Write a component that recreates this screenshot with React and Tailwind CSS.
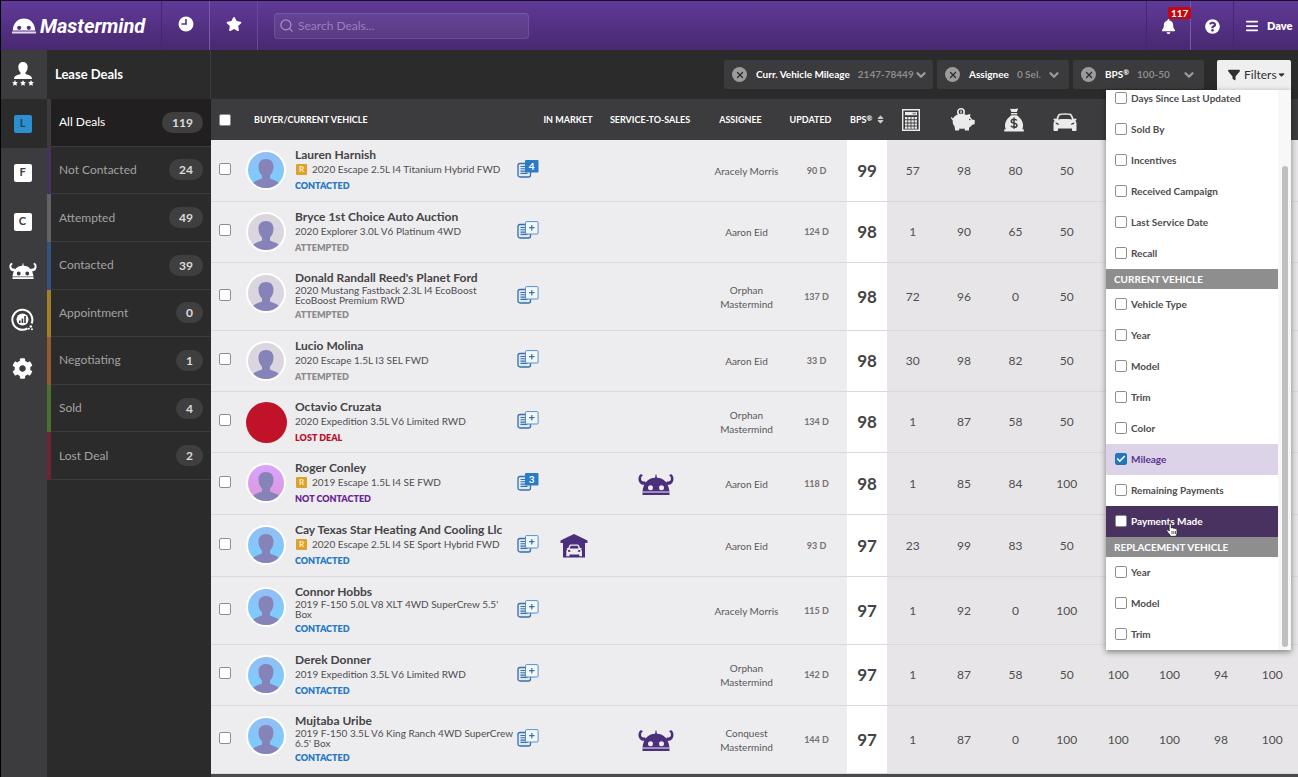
import { useState } from 'react';
import { FaBars, FaBell, FaStar, FaFilter, FaCaretDown, FaSort } from 'react-icons/fa6';
import { FaQuestionCircle, FaCog } from 'react-icons/fa';
import { X, Check, ChevronDown, Search } from 'lucide-react';

const stages = [
  { label: 'All Deals', count: 119, strip: 'bg-[#3c3b3d]' },
  { label: 'Not Contacted', count: 24, strip: 'bg-[#45325f]' },
  { label: 'Attempted', count: 49, strip: 'bg-[#636163]' },
  { label: 'Contacted', count: 39, strip: 'bg-[#35537f]' },
  { label: 'Appointment', count: 0, strip: 'bg-[#a27e24]' },
  { label: 'Negotiating', count: 1, strip: 'bg-[#94592f]' },
  { label: 'Sold', count: 4, strip: 'bg-[#4b7030]' },
  { label: 'Lost Deal', count: 2, strip: 'bg-[#6f2333]' },
];

const statusStyles = {
  CONTACTED: { text: 'text-[#2478c8]', avatar: 'bg-linear-to-b from-[#93bdf6] to-[#73d0ff]' },
  ATTEMPTED: { text: 'text-[#8b8a8c]', avatar: 'bg-[#dad5de]' },
  'LOST DEAL': { text: 'text-[#bb1128]', avatar: 'bg-[#c01228]' },
  'NOT CONTACTED': { text: 'text-[#6a2796]', avatar: 'bg-linear-to-b from-[#d9a3ff] to-[#dc98d8]' },
};

const deals = [
  { name: 'Lauren Harnish', vehicle: ['2020 Escape 2.5L I4 Titanium Hybrid FWD'], recall: true, status: 'CONTACTED', notes: 4, assignee: ['Aracely Morris'], updated: '90 D', bps: 99, scores: [57, 98, 80, 50] },
  { name: 'Bryce 1st Choice Auto Auction', vehicle: ['2020 Explorer 3.0L V6 Platinum 4WD'], status: 'ATTEMPTED', assignee: ['Aaron Eid'], updated: '124 D', bps: 98, scores: [1, 90, 65, 50] },
  { name: "Donald Randall Reed's Planet Ford", vehicle: ['2020 Mustang Fastback 2.3L I4 EcoBoost', 'EcoBoost Premium RWD'], status: 'ATTEMPTED', assignee: ['Orphan', 'Mastermind'], updated: '137 D', bps: 98, scores: [72, 96, 0, 50] },
  { name: 'Lucio Molina', vehicle: ['2020 Escape 1.5L I3 SEL FWD'], status: 'ATTEMPTED', assignee: ['Aaron Eid'], updated: '33 D', bps: 98, scores: [30, 98, 82, 50] },
  { name: 'Octavio Cruzata', vehicle: ['2020 Expedition 3.5L V6 Limited RWD'], status: 'LOST DEAL', assignee: ['Orphan', 'Mastermind'], updated: '134 D', bps: 98, scores: [1, 87, 58, 50] },
  { name: 'Roger Conley', vehicle: ['2019 Escape 1.5L I4 SE FWD'], recall: true, status: 'NOT CONTACTED', notes: 3, service: true, assignee: ['Aaron Eid'], updated: '118 D', bps: 98, scores: [1, 85, 84, 100] },
  { name: 'Cay Texas Star Heating And Cooling Llc', vehicle: ['2020 Escape 2.5L I4 SE Sport Hybrid FWD'], recall: true, status: 'CONTACTED', market: true, assignee: ['Aaron Eid'], updated: '93 D', bps: 97, scores: [23, 99, 83, 50] },
  { name: 'Connor Hobbs', vehicle: ["2019 F-150 5.0L V8 XLT 4WD SuperCrew 5.5'", 'Box'], status: 'CONTACTED', assignee: ['Aracely Morris'], updated: '115 D', bps: 97, scores: [1, 92, 0, 100] },
  { name: 'Derek Donner', vehicle: ['2019 Expedition 3.5L V6 Limited RWD'], status: 'CONTACTED', assignee: ['Orphan', 'Mastermind'], updated: '142 D', bps: 97, scores: [1, 87, 58, 50, 100, 100, 94, 100] },
  { name: 'Mujtaba Uribe', vehicle: ['2019 F-150 3.5L V6 King Ranch 4WD SuperCrew', "6.5' Box"], status: 'CONTACTED', service: true, assignee: ['Conquest', 'Mastermind'], updated: '144 D', bps: 97, scores: [1, 87, 0, 100, 100, 100, 98, 100] },
];

const filterGroups = [
  { options: ['Days Since Last Updated', 'Sold By', 'Incentives', 'Received Campaign', 'Last Service Date', 'Recall'] },
  { title: 'CURRENT VEHICLE', options: ['Vehicle Type', 'Year', 'Model', 'Trim', 'Color', 'Mileage', 'Remaining Payments', 'Payments Made'] },
  { title: 'REPLACEMENT VEHICLE', options: ['Year', 'Model', 'Trim'] },
];

const Bps = () => (
  <span>BPS<span className="align-top text-[7px]">®</span></span>
);

const chips = [
  { id: 'mileage', label: 'Curr. Vehicle Mileage', value: '2147-78449', width: 'w-[209px]' },
  { id: 'assignee', label: 'Assignee', value: '0 Sel.', width: 'w-[132px]' },
  { id: 'bps', label: <Bps />, value: '100-50', width: 'w-[131px]' },
];

const LogoMark = () => (
  <svg width="24" height="16" viewBox="0 0 24 16" className="shrink-0" aria-hidden="true">
    <path fill="#fff" fillRule="evenodd" d="M.8 12.500C1 5 6 .5 12 .5s11 4.500 11.200 12zM7.200 7.700a2.100 2.100 0 1 0 0 4.200 2.100 2.100 0 0 0 0-4.200zm9.600 0a2.100 2.100 0 1 0 0 4.200 2.100 2.100 0 0 0 0-4.200z" />
    <path fill="#e6dcf2" d="M0 13.500h24v2H0z" />
  </svg>
);

const ClockIcon = () => (
  <svg width="16" height="16" viewBox="0 0 16 16" aria-hidden="true">
    <circle cx="8" cy="8" r="7.500" fill="#fff" />
    <path d="M8 3v5H3.500" fill="none" stroke="#54318a" strokeWidth="1.600" />
  </svg>
);

const HelmetIcon = ({ className }) => (
  <svg viewBox="0 0 36 22" fill="currentColor" className={className} aria-hidden="true">
    <path d="M3 1C0 3 0 7 1.500 9.500 3 12 6 12.500 8.500 11L7 8.200C5 9 3.500 8 3.100 6.200 2.800 4.500 3.500 3 5 2.500zM33 1c3 2 3 6 1.500 8.500-1.500 2.500-4.500 3-7 1.500L29 8.200c2 .8 3.500-.2 3.900-2 .3-1.700-.4-3.200-1.900-3.700z" />
    <path fillRule="evenodd" d="M17.600 1.500h.8l.5 3.200C26 5 30.500 10 31.500 18.500h-27C5.500 10 10 5 17.100 4.700zM12.500 12.200a2.500 2.500 0 1 0 0 5 2.500 2.500 0 0 0 0-5zm11 0a2.500 2.500 0 1 0 0 5 2.500 2.500 0 0 0 0-5z" />
    <path d="M4.500 19.500h27V22h-27z" />
  </svg>
);

const OwnerIcon = () => (
  <svg width="22" height="25" viewBox="0 0 22 25" fill="#fff" aria-hidden="true">
    <path d="M11 0c3 0 4.700 2 4.700 5 0 2.500-1 4.200-2.200 5.500V12c3.500 1 6.500 2 6.500 5H2c0-3 3-4 6.500-5v-1.500C7.300 9.200 6.300 7.500 6.300 5c0-3 1.700-5 4.700-5z" />
    <path d="m3 18 .9 2 2.100.2-1.600 1.400.5 2.200L3 22.700l-1.900 1.100.5-2.200L0 20.200l2.100-.2zM11 18l.9 2 2.100.2-1.600 1.400.5 2.200-1.900-1.100-1.900 1.100.5-2.200L8 20.200l2.100-.2zM19 18l.9 2 2.100.2-1.600 1.400.5 2.200-1.900-1.100-1.900 1.100.5-2.200-1.600-1.400 2.100-.2z" />
  </svg>
);

const TargetIcon = () => (
  <svg width="23" height="23" viewBox="0 0 23 23" aria-hidden="true">
    <path d="M16.500 20.300A10 10 0 1 1 20.600 15.500" fill="none" stroke="#fff" strokeWidth="2" />
    <circle cx="11.500" cy="11.500" r="6" fill="#fff" />
    <path d="M8 12.500h1.600V15H8zm2.600-2h1.600V15h-1.600zM13.200 8h1.600v7h-1.600z" fill="#3c3b3d" />
    <circle cx="19.800" cy="18.500" r="1.300" fill="#fff" />
    <circle cx="17.800" cy="20.800" r="1" fill="#fff" />
    <circle cx="21" cy="21.300" r="1" fill="#fff" />
  </svg>
);

const CalculatorIcon = () => (
  <svg width="18" height="22" viewBox="0 0 18 22" aria-hidden="true">
    <path d="M.7.7h16.600v20.600H.7z" fill="#3c3b3d" stroke="#ebebeb" strokeWidth="1.400" />
    <path d="M3 3h12v3.200H3z" fill="#ebebeb" />
    <path d="M10.500 3.800h3.500v1.500h-3.500z" fill="#8a898b" />
    <path d="M3 8h2.400v2.200H3zM6.200 8h2.400v2.200H6.200zM9.400 8h2.400v2.200H9.400zM12.600 8H15v2.200h-2.400zM3 11.200h2.400v2.200H3zm3.200 0h2.400v2.200H6.200zm3.200 0h2.400v2.200H9.400zm3.200 0H15v2.200h-2.400zM3 14.400h2.400v2.200H3zm3.200 0h2.400v2.200H6.200zm3.200 0h2.400v2.200H9.400zm3.200 0H15v2.200h-2.400zM3 17.600h2.400v2.200H3zm3.200 0h2.400v2.200H6.200zm3.200 0h2.400v2.200H9.400zm3.200 0H15v2.200h-2.400z" fill="#ebebeb" />
  </svg>
);

const PiggyIcon = () => (
  <svg width="24" height="23" viewBox="0 0 24 23" fill="#ebebeb" aria-hidden="true">
    <circle cx="10" cy="4" r="3.200" fill="none" stroke="#ebebeb" strokeWidth="1.600" />
    <path d="M9.400 2.500h1.300v3H9.400z" />
    <path d="M.7 9c.4 1 .9 1.200 1.500 1.300C3.300 7.600 6.400 6 10.500 6c2 0 3.800.3 5.300 1 1-.8 2.400-1 3.700-.6l-.5 2.400c.9.800 1.500 1.700 1.900 2.700l2.800.6v4l-2.700 1c-.8 1.200-1.800 2-3 2.600V22.500h-4l-.4-2a15 15 0 0 1-5.200 0L8 22.500H4.200l-.7-4.200C2 16.800 1.400 14.500 1.700 12 .8 11.600 0 10.600.1 9.200z" />
    <circle cx="18.800" cy="11.500" r=".8" fill="#3c3b3d" />
  </svg>
);

const MoneyBagIcon = () => (
  <svg width="20" height="24" viewBox="0 0 20 24" fill="#ebebeb" aria-hidden="true">
    <path d="M6 .6c1.500 1 2.500-.4 4 .3 1.500.7 2.500-.7 4.200-.3L12.800 4H7.400z" />
    <path d="M7 5h6.300v1.400H7z" />
    <path d="M7.400 7.200h5.400c3.700 2.800 6.300 6 6.300 10.300 0 1.500-.3 2.700-.8 3.700h1.500V23.500H.3v-2.300h1.600C1.300 20 1 19 1 17.500 1 13.200 3.700 10 7.400 7.200z" />
    <path d="M12.800 12.500c-.5-.9-1.500-1.300-2.800-1.300-1.600 0-2.700.7-2.700 2 0 2.700 5.700 1.200 5.700 4 0 1.400-1.200 2.100-2.900 2.100-1.500 0-2.600-.5-3.100-1.600M10 9.500v11.300" fill="none" stroke="#3c3b3d" strokeWidth="1.500" />
  </svg>
);

const CarIcon = () => (
  <svg width="24" height="18" viewBox="0 0 24 18" fill="currentColor" aria-hidden="true">
    <path fillRule="evenodd" d="M6 .8C9.500-.1 14.500-.1 18 .8c1.200 1.300 2 3.200 2.700 5.200.6-.7 2.400-.8 2.800.2.200.8-.5 1.200-1.400 1.400 1 .9 1.400 2 1.400 3.400v6.300c0 .5-.4.700-.8.700h-2.900c-.5 0-.8-.3-.8-.7V15.500H5v1.800c0 .4-.3.700-.8.700H1.300c-.4 0-.8-.2-.8-.7V11c0-1.400.4-2.500 1.400-3.400C1 7.400.3 7 .5 6.200c.4-1 2.200-.9 2.800-.2C4 4 4.800 2.100 6 .8zM6.800 2.300C6 3.500 5.400 4.900 5 6.500c4.500-.6 9.500-.6 14 0-.4-1.600-1-3-1.800-4.200-3-.6-7.400-.6-10.400 0zM2.500 9.500c.2 1.700 1.500 2.300 3.700 2.200C5.700 10.400 4.400 9.700 2.500 9.500zm19 0c-1.900.2-3.200.9-3.700 2.200 2.200.1 3.500-.5 3.700-2.200z" />
  </svg>
);

const GarageIcon = () => (
  <svg width="28" height="24" viewBox="0 0 28 24" aria-hidden="true">
    <path d="M14 0 27.500 6.500V9H25v14.500H3V9H.5V6.500z" fill="#4b2e7c" />
    <g transform="translate(6 10) scale(.68)" fill="#edecee">
      <path fillRule="evenodd" d="M6 .8h12c1.200 1.300 2 3.200 2.700 5.200l2.800.2-1.400 1.400c1 .9 1.400 2 1.400 3.400v7h-4v-2.500H5V18H.5V11c0-1.400.4-2.500 1.400-3.400L.5 6.200 3.300 6C4 4 4.800 2.100 6 .8zM7 2.500 5.200 6.500h13.600L17 2.500zM3 9v2.500h4L5.500 9zm18 0v2.500h-4L18.500 9z" />
    </g>
  </svg>
);

const NotesIcon = ({ count }) => (
  <svg width="22" height="18" viewBox="0 0 22 18" aria-hidden="true">
    <rect x="1" y="3.500" width="12.500" height="13.500" rx="2" fill="#dceafa" stroke="#3c6ea5" strokeWidth="1.300" />
    <path d="M3.500 6.500H9m-5.500 2.300H9m-5.500 2.300H9m-5.500 2.300h7" stroke="#3c6ea5" strokeWidth="1.100" />
    {count ? (
      <>
        <rect x="8" y="0" width="13.500" height="12.500" rx="1" fill="#2a7cc6" />
        <text x="14.700" y="9.500" textAnchor="middle" fontSize="10" fontWeight="700" fill="#fff">{count}</text>
      </>
    ) : (
      <>
        <rect x="8.500" y=".6" width="12.600" height="12.400" rx="1" fill="#f3f8fe" stroke="#5591c9" />
        <path d="M14.800 4v5.400M12.100 6.700h5.400" stroke="#3c6ea5" strokeWidth="1.200" />
      </>
    )}
  </svg>
);

const Avatar = ({ status }) => {
  if (status === 'LOST DEAL') {
    return <div className={`size-[41px] rounded-full ${statusStyles[status].avatar}`} />;
  }
  return (
    <div className={`size-10 overflow-hidden rounded-full border-2 border-white ${statusStyles[status].avatar}`}>
      <svg viewBox="0 0 36 36" fill="#8583b8" aria-hidden="true">
        <path d="M18 7c4.800 0 7.500 3 7.500 7.500 0 4-1.300 7-3.500 9v3c3 1.500 7 2 9 4.500V38H5v-7c2-2.500 6-3 9-4.500v-3c-2.200-2-3.500-5-3.500-9C10.500 10 13.200 7 18 7z" />
      </svg>
    </div>
  );
};

const PointerIcon = () => (
  <svg width="13" height="15" viewBox="0 0 13 15" aria-hidden="true">
    <path d="M3.500 1.200c.9-.7 1.800 0 1.800 1V6c.6-.6 1.600-.4 1.900.2.700-.5 1.700-.3 1.900.5.800-.4 2 0 2 1.200v2.500c0 2-1 2.500-1 4H4.500C4 12.500 1.500 10.500.8 9c-.4-1 .7-1.700 1.500-1l.8.8V2z" fill="#fff" stroke="#222" strokeWidth=".9" />
    <path d="M6 9v3m1.800-3v3m1.700-3v3" stroke="#222" strokeWidth=".7" />
  </svg>
);

const CheckBox = (props) => (
  <span className="relative block size-3 shrink-0">
    <input
      type="checkbox"
      className="peer block size-3 appearance-none rounded-[2px] border border-[#8e8e8e] bg-white checked:border-[#1f78bd] checked:bg-[#1f78bd]"
      {...props}
    />
    <Check className="pointer-events-none absolute inset-0 hidden size-3 p-px text-white peer-checked:block" strokeWidth={4} />
  </span>
);

const TopBar = () => (
  <header className="flex h-[50px] items-stretch border-t border-[#1a0f28] bg-linear-to-b from-[#603a99] to-[#482870] text-white">
    <a href="#home" className="flex w-[161px] items-center gap-1 border-r border-[#452672] pl-[11px]">
      <LogoMark />
      <span className="font-['Roboto'] text-[20px] leading-6 font-bold italic">Mastermind</span>
    </a>
    <button aria-label="Recent" className="flex w-12 items-center justify-center border-r border-[#7a5aa8] pb-1"><ClockIcon /></button>
    <button aria-label="Favorites" className="flex w-12 items-center justify-center border-r border-[#6a489c] pb-1"><FaStar className="size-4" /></button>
    <div className="flex flex-1 items-center pl-4">
      <label className="flex h-[26px] w-[255px] items-center gap-1 rounded-[4px] border border-white/10 bg-white/7 px-1">
        <Search className="size-[15px] shrink-0 text-[#a98fcf]" />
        <input type="search" placeholder="Search Deals..." aria-label="Search Deals" className="w-full bg-transparent text-[12px] outline-none placeholder:text-[#9a7fc4]" />
      </label>
    </div>
    <button aria-label="Notifications" className="relative flex w-11 items-center justify-center border-l border-[#452672] pt-px">
      <FaBell className="size-[15px]" />
      <span className="absolute top-[6px] left-[21px] rounded-[2px] bg-[#c4060f] px-[3px] text-[10px] leading-3 font-bold">117</span>
    </button>
    <button aria-label="Help" className="flex w-[43px] items-center justify-center border-l border-[#7a5aa8] pt-px"><FaQuestionCircle className="size-[15px]" /></button>
    <button className="flex w-[65px] items-center gap-2 border-l border-[#452672] pt-px pl-[11px] text-[11px] font-extrabold">
      <FaBars className="size-[14px]" />
      Dave
    </button>
  </header>
);

const Rail = () => (
  <nav className="flex w-[46px] shrink-0 flex-col bg-[#3c3b3d] text-white *:pr-[3px]">
    <a href="#owners" aria-label="Owners" className="flex h-[49px] items-center justify-center"><OwnerIcon /></a>
    <a href="#lease" className="flex h-[49px] items-center justify-center bg-[#2b2b2b]">
      <span className="flex size-[18px] items-center justify-center rounded-[2px] bg-[#2c8fd0] text-[11px] font-bold text-[#22435c]">L</span>
    </a>
    <a href="#finance" className="flex h-[49px] items-center justify-center">
      <span className="flex size-[18px] items-center justify-center rounded-[2px] bg-white text-[11px] font-bold text-[#3c3b3d]">F</span>
    </a>
    <a href="#cash" className="flex h-[49px] items-center justify-center">
      <span className="flex size-[18px] items-center justify-center rounded-[2px] bg-white text-[11px] font-bold text-[#3c3b3d]">C</span>
    </a>
    <a href="#service" aria-label="Service" className="flex h-[49px] items-center justify-center"><HelmetIcon className="w-[28px]" /></a>
    <a href="#market" aria-label="Market" className="flex h-[49px] items-center justify-center"><TargetIcon /></a>
    <a href="#settings" aria-label="Settings" className="flex h-[49px] items-center justify-center"><FaCog className="size-[21px]" /></a>
  </nav>
);

const Sidebar = () => (
  <aside className="w-[164px] shrink-0 bg-[#2b2b2b]">
    <h1 className="flex h-[49px] items-center border-r border-[#3c3b3d] pl-2 text-[13px] font-bold text-white">Lease Deals</h1>
    <ul className="grid h-[381px] grid-rows-8">
      {stages.map((stage, i) => (
        <li key={stage.label} className="flex">
          <span className={`w-1 ${stage.strip}`} />
          <a
            href="#stage"
            className={`flex flex-1 items-center justify-between border-b border-[#3b3b3b] pr-2 pl-2 text-[12px] ${i === 0 ? 'bg-[#211f20] text-white' : 'text-[#a3a2a3]'}`}
          >
            {stage.label}
            <span className="rounded-full bg-[#403f40] px-[10px] text-[12px] leading-[21px] font-bold text-[#dcdcdc]">{stage.count}</span>
          </a>
        </li>
      ))}
    </ul>
  </aside>
);

const FilterMenu = ({ checked, onToggle }) => (
  <div className="absolute top-full right-0 z-10 flex h-[560px] w-[185px] bg-white shadow-[0_2px_6px_rgba(0,0,0,0.45)]">
    <div className="flex flex-1 flex-col justify-end overflow-hidden">
      {filterGroups.map((group, g) => (
        <fieldset key={g} className="shrink-0">
          {group.title && <legend className="block h-5 w-full bg-[#8e8e8e] pl-2 text-[10px] leading-5 font-bold text-white">{group.title}</legend>}
          {group.options.map((option) => {
            const id = `${g}-${option}`;
            const hovered = option === 'Payments Made';
            let rowStyle = 'text-[#4d4c4e]';
            if (checked[id]) rowStyle = 'bg-[#ddd3e8] text-[#5a3391]';
            if (hovered) rowStyle = 'bg-[#49325f] text-white';
            return (
              <label key={id} className={`relative flex h-[31px] items-center gap-1 pl-[9px] text-[10px] font-bold ${rowStyle}`}>
                <CheckBox checked={!!checked[id]} onChange={() => onToggle(id)} />
                {option}
                {hovered && <span className="absolute top-[16px] left-[60px]"><PointerIcon /></span>}
              </label>
            );
          })}
        </fieldset>
      ))}
    </div>
    <div className="flex w-[13px] flex-col justify-end bg-[#f8f8f8] pb-[3px]">
      <div className="mx-auto h-[481px] w-[6px] rounded-full bg-[#bfbfbf]" />
    </div>
  </div>
);

const FilterBar = ({ checked, onToggle }) => (
  <div className="flex h-[49px] items-center justify-end gap-1 bg-[#2b2b2b] pr-[7px] text-white">
    {chips.map((chip) => (
      <button key={chip.id} className={`flex h-[29px] items-center rounded-[2px] bg-[#3b3a3c] pr-2 pl-2 text-[10px] ${chip.width}`}>
        <span className="mr-[9px] flex size-[15px] shrink-0 items-center justify-center rounded-full bg-[#9b9b9b]">
          <X className="size-[10px] text-[#2b2b2b]" strokeWidth={3} />
        </span>
        <span className="mr-2 font-bold whitespace-nowrap">{chip.label}</span>
        <span className="font-bold whitespace-nowrap text-[#8d8d8d]">{chip.value}</span>
        <ChevronDown className="ml-auto size-[14px] shrink-0 text-[#9b9b9b]" strokeWidth={4} />
      </button>
    ))}
    <div className="relative ml-[9px]">
      <button className="flex h-[30px] w-[74px] items-center rounded-t-[2px] bg-[#f0eff0] pl-[11px] text-[12px] text-[#2f2e30]">
        <FaFilter className="mr-1 size-3" />
        Filters
        <FaCaretDown className="size-[9px]" />
      </button>
      <FilterMenu checked={checked} onToggle={onToggle} />
    </div>
  </div>
);

const DealRow = ({ deal }) => {
  const wraps = deal.vehicle.length > 1;
  let height = 'h-[61px]';
  if (deal.recall) height = 'h-[62px]';
  if (wraps) height = 'h-[68px]';

  return (
    <tr className={`${height} *:border-b *:border-[#d9d8da]`}>
      <td className="pb-1 pl-2"><CheckBox aria-label={`Select ${deal.name}`} /></td>
      <td className="align-top">
        <div className="flex gap-[9px]">
          <div className="w-10 pt-[10px]"><Avatar status={deal.status} /></div>
          <div className="pt-2 whitespace-nowrap">
            <div className="text-[12px] leading-[14px] font-bold text-[#454446]">{deal.name}</div>
            <div className={`flex items-center gap-[5px] pb-0.5 text-[10px] text-[#4f4e50] ${wraps ? 'leading-[10px]' : 'leading-[14px]'}`}>
              {deal.recall && <span className="ml-px size-[11px] rounded-[1px] bg-[#dba32c] text-center text-[8px] leading-[11px] font-bold text-[#fbeecb]">R</span>}
              <span>{deal.vehicle.map((line) => <span key={line} className="block">{line}</span>)}</span>
            </div>
            <div className={`text-[9px] leading-4 font-extrabold ${statusStyles[deal.status].text}`}>{deal.status}</div>
          </div>
        </div>
      </td>
      <td className="pb-1 pl-[3px]"><NotesIcon count={deal.notes} /></td>
      <td>{deal.market && <span className="flex justify-center"><GarageIcon /></span>}</td>
      <td>{deal.service && <HelmetIcon className="mx-auto w-9 text-[#4b2e7c]" />}</td>
      <td className="text-center text-[10px] leading-[14px] text-[#5a595b]">
        {deal.assignee.map((line) => <span key={line} className="block">{line}</span>)}
      </td>
      <td className="text-center text-[9px] font-bold text-[#737274]">{deal.updated}</td>
      <td className="bg-white text-center text-[17px] font-bold text-[#454446]">{deal.bps}</td>
      {Array.from({ length: 8 }, (_, i) => (
        <td key={i} className="bg-[#e7e5e7] text-center text-[12px] text-[#4f4e50]">{deal.scores[i]}</td>
      ))}
    </tr>
  );
};

const DealTable = () => (
  <table className="w-full table-fixed border-separate border-spacing-0 bg-[#edecee]">
    <thead>
      <tr className="h-[41px] bg-[#3c3b3d] text-[9px] font-bold whitespace-nowrap text-white">
        <th className="w-[35px] pl-2"><CheckBox aria-label="Select all deals" /></th>
        <th className="w-[268px] pl-2 text-left">BUYER/CURRENT VEHICLE</th>
        <th className="w-[29px]" />
        <th className="w-[62px] pr-3">IN MARKET</th>
        <th className="w-[102px] pr-3">SERVICE-TO-SALES</th>
        <th className="w-[79px] pr-3">ASSIGNEE</th>
        <th className="w-[61px] pr-3">UPDATED</th>
        <th className="w-10">
          <span className="flex items-center gap-1 pl-[3px]"><Bps /> <FaSort className="size-[9px] text-[#c9c9c9]" /></span>
        </th>
        <th className="pr-[3px]"><span className="flex justify-center"><CalculatorIcon /></span></th>
        <th className="pr-[3px]"><span className="flex justify-center"><PiggyIcon /></span></th>
        <th className="pr-[3px]"><span className="flex justify-center"><MoneyBagIcon /></span></th>
        <th className="pr-[3px]"><span className="flex justify-center pt-1 text-[#ebebeb]"><CarIcon /></span></th>
        <th />
        <th />
        <th />
        <th />
      </tr>
    </thead>
    <tbody>
      {deals.map((deal) => <DealRow key={deal.name} deal={deal} />)}
    </tbody>
  </table>
);

const App = () => {
  const [checked, setChecked] = useState({ '1-Mileage': true });

  const handleToggle = (id) => {
    setChecked({ ...checked, [id]: !checked[id] });
  };

  return (
    <div className="flex min-h-screen flex-col border-l border-black bg-[#4a494b] font-['Lato',sans-serif]">
      <TopBar />
      <div className="flex flex-1">
        <Rail />
        <Sidebar />
        <main className="min-w-0 flex-1">
          <FilterBar checked={checked} onToggle={handleToggle} />
          <DealTable />
        </main>
      </div>
    </div>
  );
};

export default App;
